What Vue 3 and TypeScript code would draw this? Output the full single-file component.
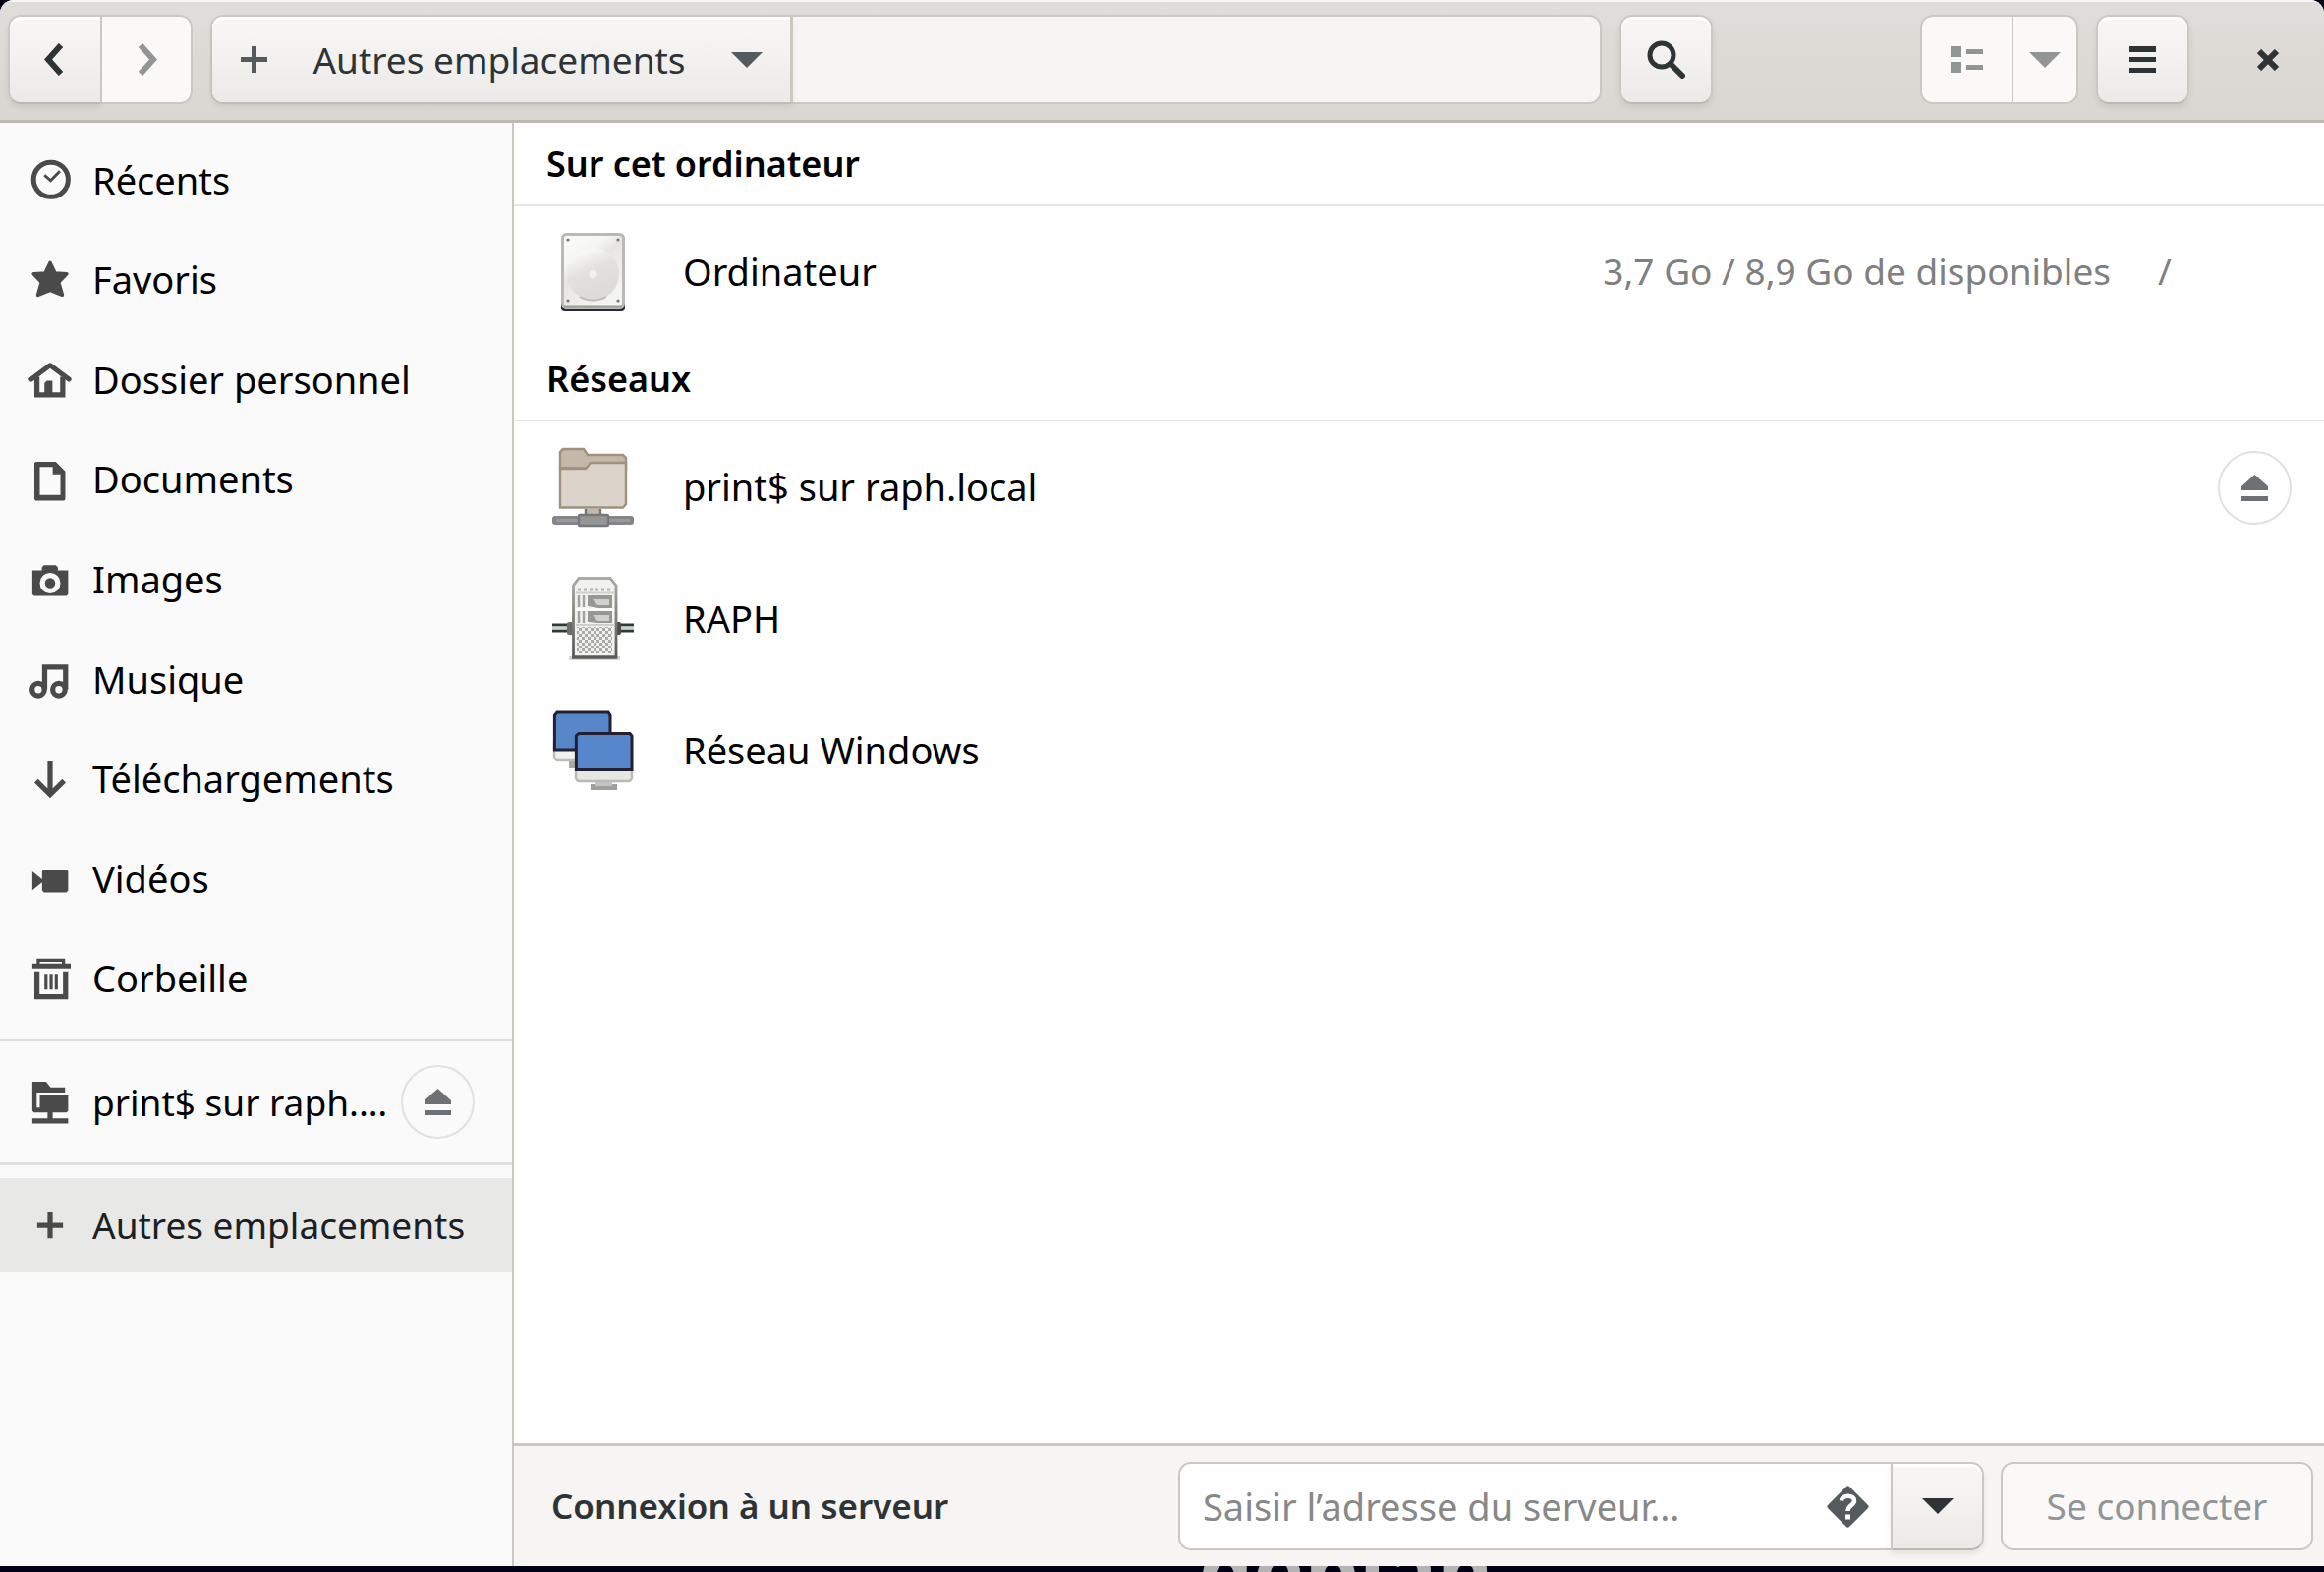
<script setup lang="ts">
import { ref } from 'vue'

interface Place {
  id: string
  label: string
}

const places: Place[] = [
  { id: 'recent', label: 'Récents' },
  { id: 'starred', label: 'Favoris' },
  { id: 'home', label: 'Dossier personnel' },
  { id: 'documents', label: 'Documents' },
  { id: 'pictures', label: 'Images' },
  { id: 'music', label: 'Musique' },
  { id: 'downloads', label: 'Téléchargements' },
  { id: 'videos', label: 'Vidéos' },
  { id: 'trash', label: 'Corbeille' },
]

const serverAddress = ref('')
</script>

<template>
  <div class="desktop">
    <div class="window">
      <header class="headerbar">
        <div class="linked">
          <button type="button" class="btn nav" aria-label="Précédent">
            <svg width="24" height="33" viewBox="0 0 24 33"><path d="M18 2 5 16.500 18 31" fill="none" stroke="currentColor" stroke-width="6" /></svg>
          </button>
          <button type="button" class="btn nav" disabled aria-label="Suivant">
            <svg width="21" height="33" viewBox="0 0 21 33"><path d="M4 2 17 16.500 4 31" fill="none" stroke="currentColor" stroke-width="6" /></svg>
          </button>
        </div>
        <div class="pathbar">
          <button type="button" class="btn crumb">
            <svg width="27" height="27" viewBox="0 0 27 27"><path d="M13.500 0V27M0 13.500H27" stroke="currentColor" stroke-width="5" /></svg>
            <span>Autres emplacements</span>
            <svg width="32" height="16" viewBox="0 0 32 16"><path d="M0 0H32L16 16Z" fill="currentColor" /></svg>
          </button>
        </div>
        <button type="button" class="btn square" aria-label="Rechercher">
          <svg width="39" height="39" viewBox="0 0 39 39"><circle cx="15" cy="15" r="12" fill="none" stroke="currentColor" stroke-width="5" /><path d="M24 24 36 36" stroke="currentColor" stroke-width="6" stroke-linecap="round" /></svg>
        </button>
        <div class="linked view">
          <button type="button" class="btn list" disabled aria-label="Affichage en liste">
            <svg width="33" height="27" viewBox="0 0 33 27"><path d="M0 0H11V11H0ZM0 16H11V27H0ZM16 3H33V8H16ZM16 19H33V24H16Z" fill="currentColor" /></svg>
          </button>
          <button type="button" class="btn narrow" disabled aria-label="Options d’affichage">
            <svg width="32" height="16" viewBox="0 0 32 16"><path d="M0 0H32L16 16Z" fill="currentColor" /></svg>
          </button>
        </div>
        <button type="button" class="btn square" aria-label="Menu">
          <svg width="27" height="27" viewBox="0 0 27 27"><path d="M0 0H27V6H0ZM0 11H27V16H0ZM0 22H27V27H0Z" fill="currentColor" /></svg>
        </button>
        <button type="button" class="close" aria-label="Fermer">
          <svg width="22" height="22" viewBox="0 0 22 22"><path d="M2 2 20 20M20 2 2 20" stroke="currentColor" stroke-width="6" /></svg>
        </button>
      </header>

      <div class="content">
        <aside class="sidebar">
          <nav class="places" aria-label="Emplacements">
            <a v-for="place in places" :key="place.id" href="#" class="place">
              <svg class="icon" viewBox="0 0 16 16" aria-hidden="true">
                <g v-if="place.id === 'recent'" fill="none" stroke="currentColor">
                  <circle cx="8.300" cy="7.900" r="6.700" stroke-width="1.900" />
                  <path d="M5.800 6.200 8.200 8.300 11.800 4.700" stroke-width="1.100" />
                </g>
                <path v-else-if="place.id === 'starred'" fill="currentColor" stroke="currentColor" stroke-width="1.400" stroke-linejoin="round" d="M8 1.700 9.900 5.700 14.400 6 11.300 9.200 12.700 14.200 8 12.300 3.300 14.200 4.700 9.200 1.600 6 6.100 5.700Z" />
                <g v-else-if="place.id === 'home'">
                  <path d="M.7 8 8 2.600 15.300 8" fill="none" stroke="currentColor" stroke-width="1.900" stroke-linecap="round" stroke-linejoin="round" />
                  <path d="M2.900 7V14H12.900V7" fill="none" stroke="currentColor" stroke-width="2" />
                  <path d="M5.800 14V9.500L6.700 8.600H8.900V14Z" fill="currentColor" />
                </g>
                <path v-else-if="place.id === 'documents'" fill="currentColor" fill-rule="evenodd" d="M2.400 1.500H10.200L13.900 5.200V16.100L13.400 16.600H2.400L1.900 16.100V2ZM4 3.500V14.400H12V6.400H9V3.500Z" />
                <path v-else-if="place.id === 'pictures'" fill="currentColor" fill-rule="evenodd" d="M1.100 4.800H4.800V3.600L5.600 2.800H10.200L11 3.600V4.800H15V14L14.400 14.700H1.700L1.100 14ZM8 5.700A4 4 0 1 0 8 13.700A4 4 0 1 0 8 5.700ZM8 7.700A2 2 0 1 1 8 11.700A2 2 0 1 1 8 7.700Z" />
                <g v-else-if="place.id === 'music'" fill="none" stroke="currentColor" stroke-width="2">
                  <circle cx="3.400" cy="12.100" r="2.400" />
                  <circle cx="11.400" cy="12.100" r="2.400" />
                  <path d="M5.900 12V3.400H14V12" />
                </g>
                <g v-else-if="place.id === 'downloads'" fill="none" stroke="currentColor" stroke-width="2">
                  <path d="M8 1.500V14M2.600 9 8 14.300 13.400 9" />
                </g>
                <path v-else-if="place.id === 'videos'" fill="currentColor" d="M5.600 4.600H14.300L15 5.300V12.800L14.300 13.500H5.600L4.900 12.800V9.600L1.100 12.700V5.300L4.900 8.400V5.300Z" />
                <g v-else-if="place.id === 'trash'" fill="none" stroke="currentColor">
                  <path d="M1.100 3.500H16" stroke-width="1.900" />
                  <path d="M3.400 3V1.300H13.200V3" stroke-width="1.200" />
                  <path d="M2.900 5.600V15.500H14V5.600" stroke-width="2" />
                  <path d="M6.400 6.600V12.700M8.400 6.600V12.700M10.400 6.600V12.700" stroke-width="1.200" />
                </g>
              </svg>
              <span>{{ place.label }}</span>
            </a>
          </nav>

          <div class="mount">
            <a href="#" class="place">
              <svg class="icon" viewBox="0 0 16 16" aria-hidden="true">
                <path fill="currentColor" d="M1.100 0H6.400L8.200 2.200H13.800V4.200H2.800V10H4V5.200H15V11.200L14.400 11.900H9V14.200H15V16.200H1.100V14.200H7V11.900H1.700L1.100 11.200Z" />
              </svg>
              <span>print$ sur raph.…</span>
            </a>
            <button type="button" class="eject" aria-label="Démonter print$">
              <svg width="27" height="27" viewBox="0 0 27 27"><path d="M13.500 0 27 12V16H0V12ZM0 22H27V27H0Z" fill="currentColor" /></svg>
            </button>
          </div>

          <a href="#" class="place other" aria-current="page">
            <svg class="icon" viewBox="0 0 16 16" aria-hidden="true"><path d="M8 3V13M3 8H13" stroke="currentColor" stroke-width="2" /></svg>
            <span>Autres emplacements</span>
          </a>
        </aside>

        <main class="main">
          <div class="locations">
            <h2 class="section">Sur cet ordinateur</h2>
            <div class="row">
              <svg class="big" viewBox="0 0 84 84" aria-hidden="true">
                <defs>
                  <linearGradient id="diskFace" x1="0" y1="0" x2=".6" y2="1">
                    <stop offset="0" stop-color="#fbfbfa" />
                    <stop offset=".35" stop-color="#f5f5f3" />
                    <stop offset=".5" stop-color="#e6e5e2" />
                    <stop offset="1" stop-color="#f4f4f2" />
                  </linearGradient>
                  <linearGradient id="platter" x1=".2" y1="0" x2=".6" y2="1">
                    <stop offset=".1" stop-color="#f8f8f7" />
                    <stop offset=".45" stop-color="#e2e1de" />
                    <stop offset="1" stop-color="#dcdbd8" />
                  </linearGradient>
                </defs>
                <rect x="9" y="8" width="65" height="74" rx="4" fill="#2a2836" />
                <rect x="10.500" y="3.500" width="62" height="74" rx="4" fill="url(#diskFace)" stroke="#babab5" stroke-width="3" />
                <path d="M12 76.500H71" stroke="#9c9b98" stroke-width="2" />
                <circle cx="41.500" cy="44" r="26.500" fill="url(#platter)" />
                <path d="M28 67A27 27 0 0 0 55 67" fill="none" stroke="#bcbbb8" stroke-width="2" />
                <circle cx="41.500" cy="44" r="4" fill="#f2f2f0" />
                <g fill="#77776f"><circle cx="16" cy="9" r="1.600" /><circle cx="67" cy="9" r="1.600" /><circle cx="16" cy="71" r="1.600" /><circle cx="67" cy="71" r="1.600" /></g>
              </svg>
              <a href="#" class="name">Ordinateur</a>
              <span class="detail">3,7 Go / 8,9 Go de disponibles</span>
              <span class="detail path">/</span>
            </div>

            <h2 class="section">Réseaux</h2>
            <div class="row">
              <svg class="big" viewBox="0 0 84 84" aria-hidden="true">
                <path d="M8 22V6L11 3H32L36 9H72L75 12V24Z" fill="#c5b8a8" stroke="#a09080" stroke-width="2.400" />
                <path d="M8 23H34L39 17H75V59L72 62.500H8Z" fill="#dcd4cb" stroke="#a09080" stroke-width="2.400" />
                <path d="M34 64H49V70H34Z" fill="#c5b8a8" /><path d="M34 64V70M49 64V70" stroke="#77767b" stroke-width="2.400" />
                <rect x="0" y="71" width="83" height="9" rx="3" fill="#85848a" /><path d="M4 75.500H79" stroke="#9a9996" stroke-width="3" />
                <rect x="27" y="70" width="30" height="11" rx="1" fill="#969696" stroke="#77767b" stroke-width="2.400" />
              </svg>
              <a href="#" class="name">print$ sur raph.local</a>
              <button type="button" class="eject" aria-label="Démonter print$ sur raph.local">
                <svg width="27" height="27" viewBox="0 0 27 27"><path d="M13.500 0 27 12V16H0V12ZM0 22H27V27H0Z" fill="currentColor" /></svg>
              </button>
            </div>
            <div class="row">
              <svg class="big" viewBox="0 0 84 84" aria-hidden="true">
                <defs>
                  <linearGradient id="towerEdge" x1="0" y1="0" x2="0" y2="84" gradientUnits="userSpaceOnUse">
                    <stop offset="0" stop-color="#aaaaa6" />
                    <stop offset="1" stop-color="#555753" />
                  </linearGradient>
                  <pattern id="mesh" width="6" height="6" patternUnits="userSpaceOnUse">
                    <path d="M0 0H3V3H0ZM3 3H6V6H3Z" fill="#a9aaa6" />
                  </pattern>
                </defs>
                <path d="M0 48H16M68 48H83M0 54H16M68 54H83" stroke="#2e3a38" stroke-width="2.800" />
                <path d="M0 51H16M68 51H83" stroke="#ccd3c6" stroke-width="3" />
                <rect x="15" y="45" width="7" height="13" rx="2" fill="#6d6e6c" /><rect x="64" y="45" width="6" height="13" rx="2" fill="#4a4b4a" />
                <path d="M17 82H69" stroke="#d5d5d3" stroke-width="4" />
                <path d="M21.500 81V8L27 .5H59L65 8V81Z" fill="#f1f1f0" stroke="url(#towerEdge)" stroke-width="2.800" />
                <path d="M20 81H66" stroke="#5b5c58" stroke-width="3" />
                <path d="M26 12H60" stroke="#b3b5b1" stroke-width="3" stroke-dasharray="3 3" /><path d="M24 15.500H63M24 48H63" stroke="#cfd0cd" stroke-width="2" />
                <path d="M27 18V30M32 18V30M27 34V46M32 34V46" stroke="#a0a29e" stroke-width="2.400" />
                <path d="M36 18H61V31H47L36 29ZM36 34H61V46H47L36 45Z" fill="#969894" />
                <path d="M41 22H58V28H46ZM41 38H58V44H46Z" fill="#d0d1ce" /><path d="M24 32.500H63" stroke="#fff" stroke-width="2" />
                <rect x="25" y="50" width="36" height="27" fill="url(#mesh)" />
              </svg>
              <a href="#" class="name">RAPH</a>
            </div>
            <div class="row">
              <svg class="big" viewBox="0 0 84 84" aria-hidden="true">
                <rect x="17" y="52" width="22" height="8" fill="#a8aaa5" />
                <rect x="2" y="30" width="57" height="22" rx="4" fill="#f0f0ee" stroke="#bdbdb8" stroke-width="2.400" />
                <path d="M2.400 41V6L5 3H57L59 6V41Z" fill="#5786cb" stroke="#241f31" stroke-width="3" />
                <rect x="39" y="76" width="27" height="6" fill="#9ea09b" /><rect x="44" y="74" width="17" height="4" fill="#c4c5c1" />
                <rect x="24" y="50" width="57" height="23" rx="4" fill="#e6e6e3" stroke="#b9bab5" stroke-width="2.400" />
                <path d="M24.400 61.500V27L27 24.500H79L81 27V61.500Z" fill="#5786cb" stroke="#241f31" stroke-width="3" />
              </svg>
              <a href="#" class="name">Réseau Windows</a>
            </div>
          </div>

          <form class="connect" @submit.prevent>
            <label for="server">Connexion à un serveur</label>
            <div class="entry">
              <input id="server" v-model="serverAddress" type="text" placeholder="Saisir l’adresse du serveur…" />
              <button type="button" class="help" aria-label="Aide">
                <svg width="43" height="43" viewBox="0 0 43 43">
                  <path d="M21.500 3 40 21.500 21.500 40 3 21.500Z" fill="currentColor" stroke="currentColor" stroke-width="5" stroke-linejoin="round" />
                  <path d="M15 15.500C15.500 9 28 9 28 15.500 28 20 21.500 20 21.500 26" fill="none" stroke="#fff" stroke-width="4.500" />
                  <rect x="19" y="29.500" width="5" height="5" fill="#fff" />
                </svg>
              </button>
            </div>
            <button type="button" class="btn dropdown" aria-label="Serveurs récents">
              <svg width="32" height="16" viewBox="0 0 32 16"><path d="M0 0H32L16 16Z" fill="currentColor" /></svg>
            </button>
            <button type="submit" class="btn submit" disabled>Se connecter</button>
          </form>
        </main>
      </div>
    </div>
    <div class="wallpaper" aria-hidden="true"><span>debian</span></div>
  </div>
</template>

<style>
body {
  margin: 0;
  background: #000014;
}
</style>

<style scoped>
.desktop {
  display: flex;
  flex-direction: column;
  min-height: 100vh;
  background: #000014;
  color: #000;
  font: 38px/52px "Noto Sans", "Open Sans", sans-serif;
}

.desktop * {
  box-sizing: border-box;
}

svg {
  display: block;
  flex: none;
}

button,
input {
  margin: 0;
  padding: 0;
  border: 0;
  background: none;
  color: inherit;
  font: inherit;
}

a {
  color: inherit;
  text-decoration: none;
}

.window {
  display: flex;
  flex: 1;
  flex-direction: column;
  overflow: hidden;
  border-radius: 14px 14px 0 0;
  background: #fff;
}

.headerbar {
  display: flex;
  align-items: center;
  height: 125px;
  padding: 0 27px 3px 8px;
  border-top: 2px solid #f8f7f7;
  border-bottom: 3px solid #bdb8b1;
  background: linear-gradient(#dfdedb, #dedad6 35%, #dad6d1);
  color: #2e3436;
}

.btn {
  display: flex;
  align-items: center;
  justify-content: center;
  height: 91px;
  border: 2px solid #cdc7c2;
  border-bottom-color: #bfb8b1;
  border-radius: 13px;
  background: linear-gradient(#f6f5f4 20%, #ebeae8);
  box-shadow: inset 0 3px #fff, 0 4px 6px rgba(0, 0, 0, 0.07);
}

.btn:disabled {
  border-color: #cdc7c2;
  background: #faf9f8;
  box-shadow: none;
  color: #929595;
}

.linked {
  display: flex;
}

.linked .btn:first-child {
  border-right: 0;
  border-radius: 13px 0 0 13px;
}

.linked .btn:last-child {
  border-radius: 0 13px 13px 0;
}

.nav {
  width: 94px;
}

.square {
  width: 95px;
}

.list {
  width: 93px;
}

.narrow {
  width: 68px;
}

.pathbar {
  flex: 1;
  height: 91px;
  margin: 0 18px;
  border: 2px solid #cdc7c2;
  border-radius: 13px;
  background: #f6f5f4;
}

.crumb {
  justify-content: space-between;
  width: 591px;
  height: 87px;
  padding: 0 28px 0 29px;
  border-width: 0 3px 0 0;
  border-radius: 11px 0 0 11px;
  font-size: 37px;
}

.crumb svg {
  color: #555a5c;
}

.view {
  margin: 0 18px 0 211px;
}

.close {
  display: flex;
  align-items: center;
  justify-content: center;
  width: 60px;
  height: 60px;
  margin-left: 50px;
}

.content {
  display: flex;
  flex: 1;
}

.sidebar {
  width: 523px;
  border-right: 2px solid #cdc7c2;
  background: #fafafa;
}

.places {
  display: grid;
  grid-auto-rows: 1fr;
  height: 932px;
  padding: 7px 0 11px;
}

.place {
  display: flex;
  align-items: center;
  gap: 22px;
  padding-left: 30px;
  white-space: nowrap;
}

.icon {
  width: 42px;
  height: 42px;
  overflow: visible;
  color: #4a4a4a;
}

.mount {
  display: flex;
  align-items: center;
  justify-content: space-between;
  height: 129px;
  padding-right: 38px;
  border: solid #e0e0e0;
  border-width: 3px 0;
  font-size: 37px;
}

.eject {
  display: flex;
  flex: none;
  align-items: center;
  justify-content: center;
  width: 75px;
  height: 75px;
  border: 2px solid #e3e0de;
  border-radius: 50%;
  color: #6d7173;
}

.other {
  height: 96px;
  margin-top: 13px;
  background: #e8e8e7;
  color: #1c2022;
  font-size: 37px;
}

.main {
  display: flex;
  flex: 1;
  flex-direction: column;
  min-width: 0;
}

.locations {
  flex: 1;
}

.section {
  margin: 0;
  padding: 16px 33px 15px;
  border-bottom: 2px solid #e4e4e4;
  font-size: 36px;
  font-weight: 600;
}

.row {
  display: flex;
  align-items: center;
  height: 134px;
  padding: 0 33px 0 39px;
}

.big {
  width: 84px;
  height: 84px;
  overflow: visible;
}

.name,
.detail {
  padding-bottom: 2px;
}

.name {
  flex: 1;
  margin-left: 49px;
}

.detail {
  color: #808080;
  font-size: 37px;
}

.path {
  width: 184px;
  padding-left: 48px;
}

.connect {
  display: flex;
  align-items: center;
  height: 125px;
  padding: 0 11px 0 38px;
  border-top: 3px solid #cdc7c2;
  background: #f6f5f4;
  color: #2e3436;
}

.connect label {
  flex: 1;
  font-size: 35px;
  font-weight: 600;
}

.entry {
  display: flex;
  align-items: center;
  width: 725px;
  height: 90px;
  padding: 0 22px 0 23px;
  border: 2px solid #cdc7c2;
  border-right: 0;
  border-radius: 13px 0 0 13px;
  background: #fff;
}

.entry input {
  flex: 1;
  min-width: 0;
  outline: 0;
}

.entry input::placeholder {
  color: #888;
  opacity: 1;
}

.help {
  color: #555a5c;
}

.dropdown {
  width: 95px;
  height: 90px;
  margin-right: 17px;
  border-radius: 0 13px 13px 0;
}

.submit {
  width: 318px;
  height: 90px;
  font-size: 37px;
}

.wallpaper {
  display: flex;
  align-items: flex-end;
  justify-content: center;
  height: 6px;
  padding-left: 374px;
  overflow: hidden;
  color: #b4b4b4;
  font-size: 88px;
  font-weight: 700;
  line-height: 6px;
}
</style>
